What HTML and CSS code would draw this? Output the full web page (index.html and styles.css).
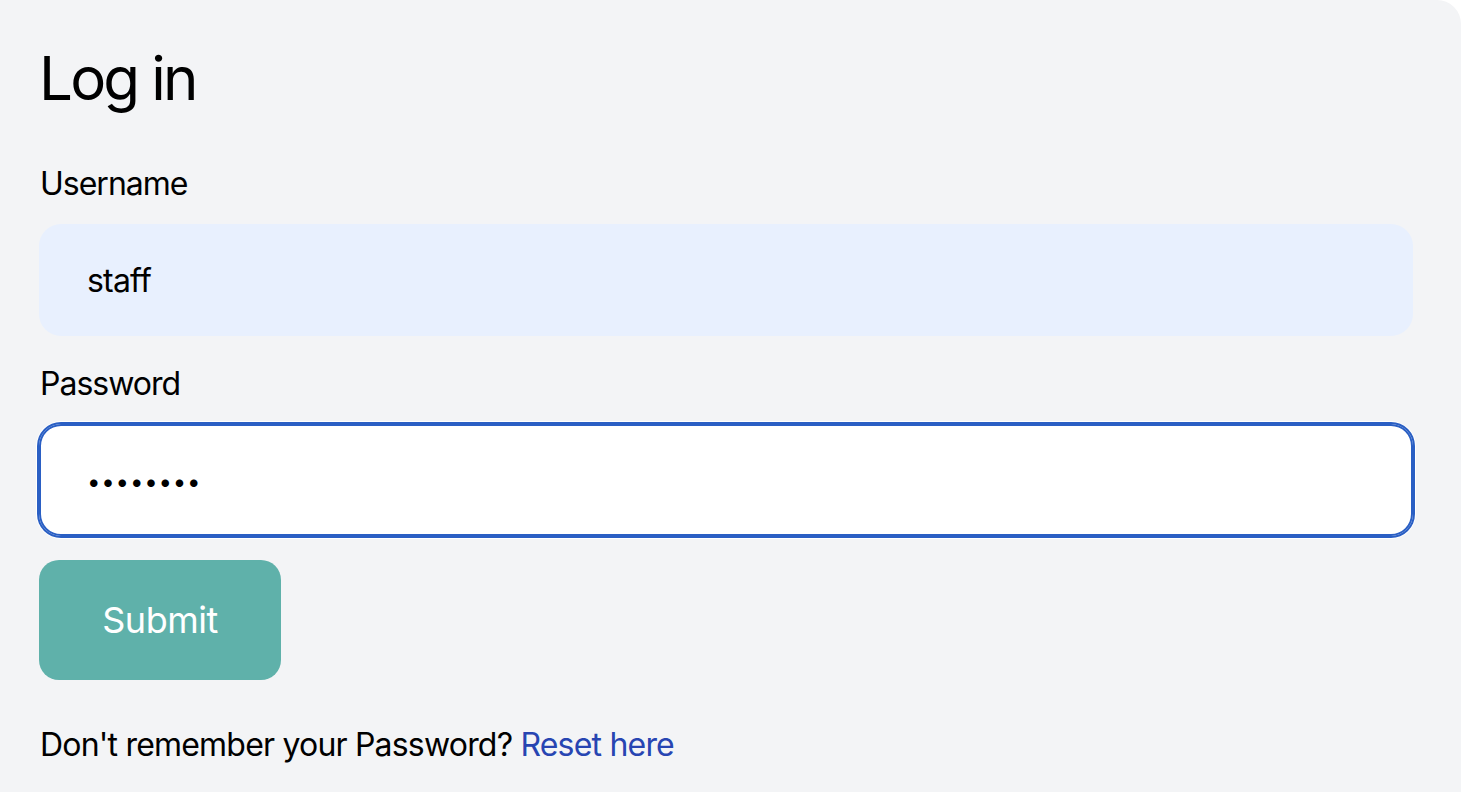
FILE: index.html
```html
<!DOCTYPE html>
<html lang="en">
<head>
<meta charset="utf-8">
<title>Log in</title>
<link rel="stylesheet" href="styles.css">
</head>
<body>
<main class="panel">
  <h1 class="title">Log in</h1>
  <form class="form" onsubmit="return false">
    <div class="field">
      <label class="label" for="username">Username</label>
      <input class="input input-filled" id="username" type="text" value="staff">
    </div>
    <div class="field">
      <label class="label" for="password">Password</label>
      <input class="input input-focus" id="password" type="password" value="password">
    </div>
    <div class="actions">
      <button class="submit" type="submit">Submit</button>
    </div>
  </form>
  <p class="footer">Don't remember your Password? <a class="link" href="#">Reset here</a></p>
</main>
</body>
</html>
```

FILE: styles.css
```css
html, body {
  margin: 0;
  padding: 0;
  background: #ffffff;
}

body {
  font-family: Inter, "Noto Sans", "Liberation Sans", sans-serif;
  color: #000;
}

.panel {
  width: 1461px;
  min-height: 792px;
  box-sizing: border-box;
  background: #f3f4f6;
  border-top-right-radius: 24px;
  padding: 42px 48px 40px 39px;
}

.title {
  margin: 0 0 46px 0;
  font-size: 60px;
  line-height: 72px;
  font-weight: 400;
  letter-spacing: -2.8px;
}

.form {
  display: flex;
  flex-direction: column;
  gap: 24px;
}

.field {
  display: flex;
  flex-direction: column;
  gap: 16px;
}

.label {
  display: block;
  font-size: 32px;
  line-height: 48px;
  padding-left: 1px;
  letter-spacing: -1px;
}

.input {
  display: block;
  width: 100%;
  box-sizing: border-box;
  height: 112px;
  padding: 32px 48px;
  border: none;
  border-radius: 22px;
  font-family: inherit;
  font-size: 32px;
  line-height: 48px;
  letter-spacing: -0.8px;
  color: #000;
  background: #ffffff;
  outline: none;
}

.input-filled {
  background: #e8f0fe;
}

.input-focus {
  box-shadow: inset 0 0 0 2px #2a5fc4, 0 0 0 2px #2a5fc4, 0 0 0 3px #ffffff;
  font-size: 24px;
  letter-spacing: 0.8px;
  padding-top: 34px;
}

.actions {
  display: flex;
}

.submit {
  width: 242px;
  height: 120px;
  padding: 0;
  border: none;
  border-radius: 20px;
  background: #5fb1aa;
  color: #ffffff;
  font-family: inherit;
  font-size: 36px;
  line-height: 48px;
  letter-spacing: -0.5px;
  cursor: pointer;
}

.footer {
  margin: 41px 0 0 1px;
  font-size: 32px;
  line-height: 48px;
  letter-spacing: -0.8px;
}

.link {
  color: #2745b2;
  text-decoration: none;
}
```
